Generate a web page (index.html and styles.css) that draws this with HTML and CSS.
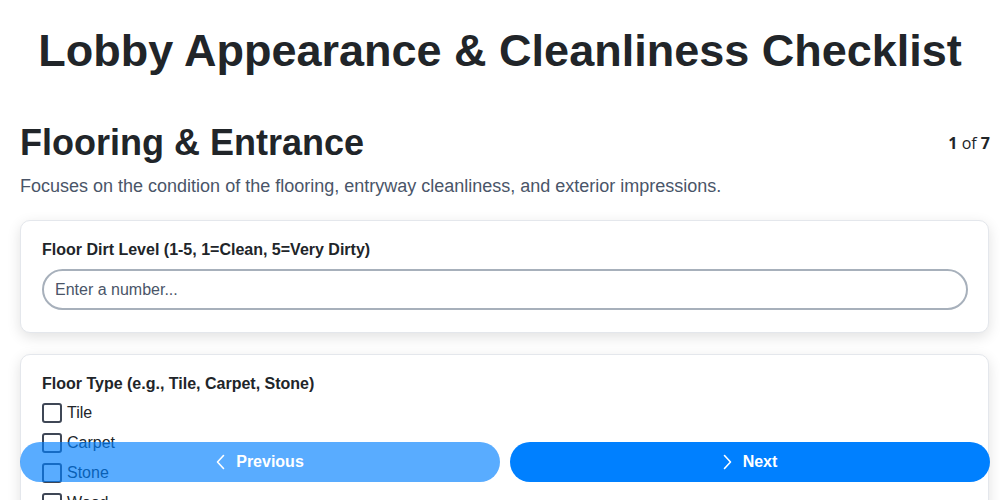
FILE: index.html
```html
<!DOCTYPE html>
<html lang="en">
<head>
<meta charset="utf-8">
<title>Lobby Appearance & Cleanliness Checklist</title>
<link rel="stylesheet" href="styles.css">
</head>
<body>
<h1 class="page-title">Lobby Appearance &amp; Cleanliness Checklist</h1>
<main class="container">
  <div class="section-head">
    <h2 class="section-title">Flooring &amp; Entrance</h2>
    <div class="progress"><b>1</b> of <b>7</b></div>
  </div>
  <p class="section-desc">Focuses on the condition of the flooring, entryway cleanliness, and exterior impressions.</p>

  <div class="card">
    <label class="field-label" for="dirt">Floor Dirt Level (1-5, 1=Clean, 5=Very Dirty)</label>
    <input class="text-input" id="dirt" type="text" placeholder="Enter a number...">
  </div>

  <div class="card">
    <div class="field-label">Floor Type (e.g., Tile, Carpet, Stone)</div>
    <div class="options">
      <label class="option"><span class="box"></span>Tile</label>
      <label class="option"><span class="box"></span>Carpet</label>
      <label class="option"><span class="box"></span>Stone</label>
      <label class="option"><span class="box"></span>Wood</label>
      <label class="option"><span class="box"></span>Other</label>
    </div>
  </div>
</main>

<nav class="nav-bar">
  <button class="nav-btn prev" type="button">
    <svg class="chev" viewBox="0 0 9 16" width="9" height="16"><polyline points="7.5,1.5 1.5,8 7.5,14.5" fill="none" stroke="#fff" stroke-width="1.6" stroke-linecap="round" stroke-linejoin="round"/></svg>
    Previous
  </button>
  <button class="nav-btn next" type="button">
    <svg class="chev" viewBox="0 0 9 16" width="9" height="16"><polyline points="1.5,1.5 7.5,8 1.5,14.5" fill="none" stroke="#fff" stroke-width="1.6" stroke-linecap="round" stroke-linejoin="round"/></svg>
    Next
  </button>
</nav>
</body>
</html>
```
FILE: styles.css
```css
* { box-sizing: border-box; }

html, body {
  margin: 0;
  padding: 0;
  background: #fff;
}

body {
  font-family: "Liberation Sans", Arial, sans-serif;
  color: #212529;
  font-size: 16px;
}

.page-title {
  margin: 25px 0 0;
  text-align: center;
  font-size: 45px;
  font-weight: bold;
  line-height: normal;
  color: #212529;
}

.container {
  margin: 45px 10px 0 20px;
}

.section-head {
  display: flex;
  justify-content: space-between;
  align-items: center;
}

.section-title {
  margin: 0;
  font-size: 36px;
  font-weight: bold;
  line-height: normal;
  color: #212529;
}

.progress {
  font-family: "Open Sans", sans-serif;
  font-size: 16px;
  color: #212529;
}

.section-desc {
  margin: 12px 0 23px;
  font-size: 18px;
  line-height: normal;
  color: #4a5568;
}

.card {
  background: #fff;
  border: 1px solid #e4e7ec;
  border-radius: 10px;
  box-shadow: 0 4px 14px rgba(0, 0, 0, 0.12);
  padding: 19px 20px 22px 21px;
  margin-bottom: 21px;
  margin-right: 1px;
}

.field-label {
  display: block;
  font-weight: bold;
  font-size: 16px;
  line-height: 19px;
  margin-bottom: 10px;
  color: #212529;
}

.text-input {
  display: block;
  width: 100%;
  height: 41px;
  border: 2px solid #a7b0bb;
  border-radius: 21px;
  padding: 0 11px;
  font-family: "Liberation Sans", Arial, sans-serif;
  font-size: 16px;
  color: #212529;
  background: #fff;
  outline: none;
}

.text-input::placeholder {
  color: #4a5568;
  opacity: 1;
}

.options {
  display: flex;
  flex-direction: column;
  gap: 10px;
}

.option {
  display: flex;
  align-items: center;
  height: 20px;
  font-size: 16px;
  color: #212529;
}

.box {
  width: 20px;
  height: 20px;
  border: 2px solid #3f4756;
  border-radius: 3px;
  margin-right: 5px;
  background: #fff;
}

.nav-bar {
  position: fixed;
  left: 20px;
  right: 10px;
  bottom: 18px;
  display: flex;
  gap: 10px;
}

.nav-btn {
  flex: 1;
  height: 40px;
  border: none;
  border-radius: 20px;
  background: #0080ff;
  color: #fff;
  font-family: "Liberation Sans", Arial, sans-serif;
  font-size: 16px;
  font-weight: bold;
  display: flex;
  align-items: center;
  justify-content: center;
  gap: 11px;
  padding: 0;
}

.nav-btn.prev {
  opacity: 0.65;
}

.chev {
  display: block;
}
```
